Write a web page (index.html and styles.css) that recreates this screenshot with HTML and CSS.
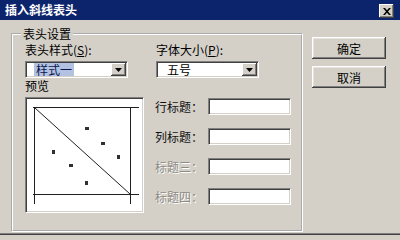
FILE: index.html
```html
<!DOCTYPE html>
<html lang="zh-CN">
<head>
<meta charset="utf-8">
<title>插入斜线表头</title>
<link rel="stylesheet" href="styles.css">
</head>
<body>
<div class="dialog">
  <div class="titlebar">
    <span class="title">插入斜线表头</span>
    <span class="close"><svg width="8" height="7" viewBox="0 0 8 7"><path d="M0 0h2l2 2.2L6 0h2L5 3.5 8 7H6L4 4.8 2 7H0l3-3.5z" fill="#000"/></svg></span>
  </div>
  <div class="body">
    <fieldset class="group">
      <legend>表头设置</legend>
      <div class="row-top">
        <div class="col">
          <div class="lbl">表头样式(<u>S</u>):</div>
          <div class="combo"><span class="val sel">样式一</span><span class="arrow"><svg width="7" height="4" viewBox="0 0 7 4"><path d="M0 0h7L3.5 4z" fill="#000"/></svg></span></div>
        </div>
        <div class="col">
          <div class="lbl">字体大小(<u>P</u>):</div>
          <div class="combo"><span class="val">五号</span><span class="arrow"><svg width="7" height="4" viewBox="0 0 7 4"><path d="M0 0h7L3.5 4z" fill="#000"/></svg></span></div>
        </div>
      </div>
      <div class="row-bottom">
        <div class="preview-col">
          <div class="lbl">预览</div>
          <div class="preview">
            <svg width="117" height="114" viewBox="0 0 117 114">
              <g stroke="#202020" stroke-width="1">
                <line x1="7" y1="9.5" x2="113" y2="9.5"/>
                <line x1="7" y1="96.5" x2="113" y2="96.5"/>
                <line x1="8.5" y1="9" x2="8.5" y2="106"/>
                <line x1="104.5" y1="9" x2="104.5" y2="106"/>
                <line x1="9" y1="10" x2="104" y2="96"/>
              </g>
              <g fill="#303030">
                <rect x="59" y="29" width="4" height="3"/>
                <rect x="75" y="44" width="4" height="3"/>
                <rect x="26" y="52" width="3" height="4"/>
                <rect x="91" y="57" width="3" height="4"/>
                <rect x="43" y="66" width="4" height="3"/>
                <rect x="59" y="83" width="3" height="4"/>
              </g>
            </svg>
          </div>
        </div>
        <div class="titles">
          <div class="trow"><span class="tl">行标题：</span><span class="input"></span></div>
          <div class="trow"><span class="tl">列标题：</span><span class="input"></span></div>
          <div class="trow"><span class="tl disabled">标题三：</span><span class="input"></span></div>
          <div class="trow"><span class="tl disabled">标题四：</span><span class="input"></span></div>
        </div>
      </div>
    </fieldset>
    <div class="buttons">
      <button class="btn">确定</button>
      <button class="btn">取消</button>
    </div>
  </div>
</div>
</body>
</html>
```

FILE: styles.css
```css
* { box-sizing: border-box; }
html, body { margin: 0; padding: 0; }
body {
  width: 400px;
  height: 235px;
  overflow: hidden;
  background: #d4d0c8;
  font-family: "Noto Sans CJK SC", "Liberation Sans", sans-serif;
  font-size: 12px;
  color: #000;
}
.dialog {
  width: 400px;
  height: 235px;
  background: #d4d0c8;
  border-bottom: 1px solid #404040;
  display: flex;
  flex-direction: column;
}
.dialog .body {
  flex: 1;
  border-bottom: 1px solid #808080;
  display: flex;
  align-items: flex-start;
}
.titlebar {
  height: 20px;
  background: #0c246b;
  display: flex;
  justify-content: space-between;
  align-items: flex-start;
  padding: 0 6px 0 5px;
}
.title {
  color: #fff;
  font-weight: bold;
  line-height: 20px;
}
.close {
  margin-top: 4px;
  width: 15px;
  height: 14px;
  background: #d4d0c8;
  box-shadow: inset -1px -1px #404040, inset 1px 1px #fff, inset -2px -2px #808080;
  display: flex;
  align-items: center;
  justify-content: center;
}
.group {
  margin: 7px 0 0 11px;
  width: 292px;
  height: 205px;
  min-width: 0;
  padding: 2px 0 0 12px;
  border: 2px groove #fff;
}
.group legend {
  padding: 0 2px;
  margin-left: -4px;
  line-height: 14px;
}
.lbl { line-height: 14px; height: 14px; white-space: nowrap; }
.row-top {
  display: grid;
  grid-template-columns: 131px 103px;
}
.col { display: flex; flex-direction: column; gap: 4px; }
.combo {
  width: 103px;
  height: 17px;
  background: #fff;
  border: 1px solid;
  border-color: #808080 #fff #fff #808080;
  box-shadow: inset 1px 1px #404040, inset -1px -1px #d4d0c8;
  display: flex;
  align-items: center;
  justify-content: space-between;
  padding: 1px 1px 1px 8px;
}
.val { line-height: 13px; padding: 0 2px; }
.val.sel { background: #b4c2e2; color: #0a1650; }
.arrow {
  width: 15px;
  height: 13px;
  background: #d4d0c8;
  box-shadow: inset -1px -1px #404040, inset 1px 1px #fff, inset -2px -2px #808080;
  display: flex;
  align-items: center;
  justify-content: center;
}
.row-bottom {
  margin-top: 1px;
  display: grid;
  grid-template-columns: 130px 136px;
}
.preview-col { display: flex; flex-direction: column; gap: 4px; }
.preview {
  width: 119px;
  height: 116px;
  background: #fff;
  border: 1px solid;
  border-color: #808080 #fff #fff #808080;
  box-shadow: inset 1px 1px #404040, inset -1px -1px #d4d0c8;
}
.preview svg { display: block; }
.titles {
  padding-top: 19px;
  display: flex;
  flex-direction: column;
  gap: 13px;
}
.trow { display: flex; align-items: center; height: 17px; }
.tl { width: 53px; white-space: nowrap; color: #111; }
.tl.disabled { color: #8c8a84; text-shadow: 1px 1px #fff; }
.input {
  width: 83px;
  height: 17px;
  background: #fff;
  border: 1px solid;
  border-color: #808080 #fff #fff #808080;
  box-shadow: inset 1px 1px #404040, inset -1px -1px #d4d0c8;
}
.buttons {
  margin: 17px 0 0 9px;
  display: flex;
  flex-direction: column;
  gap: 7px;
}
.btn {
  width: 74px;
  height: 22px;
  padding: 0;
  border: none;
  background: #d4d0c8;
  font: inherit;
  color: #000;
  box-shadow: inset -1px -1px #404040, inset 1px 1px #fff, inset -2px -2px #808080, inset 2px 2px #e6e3de;
}
```
